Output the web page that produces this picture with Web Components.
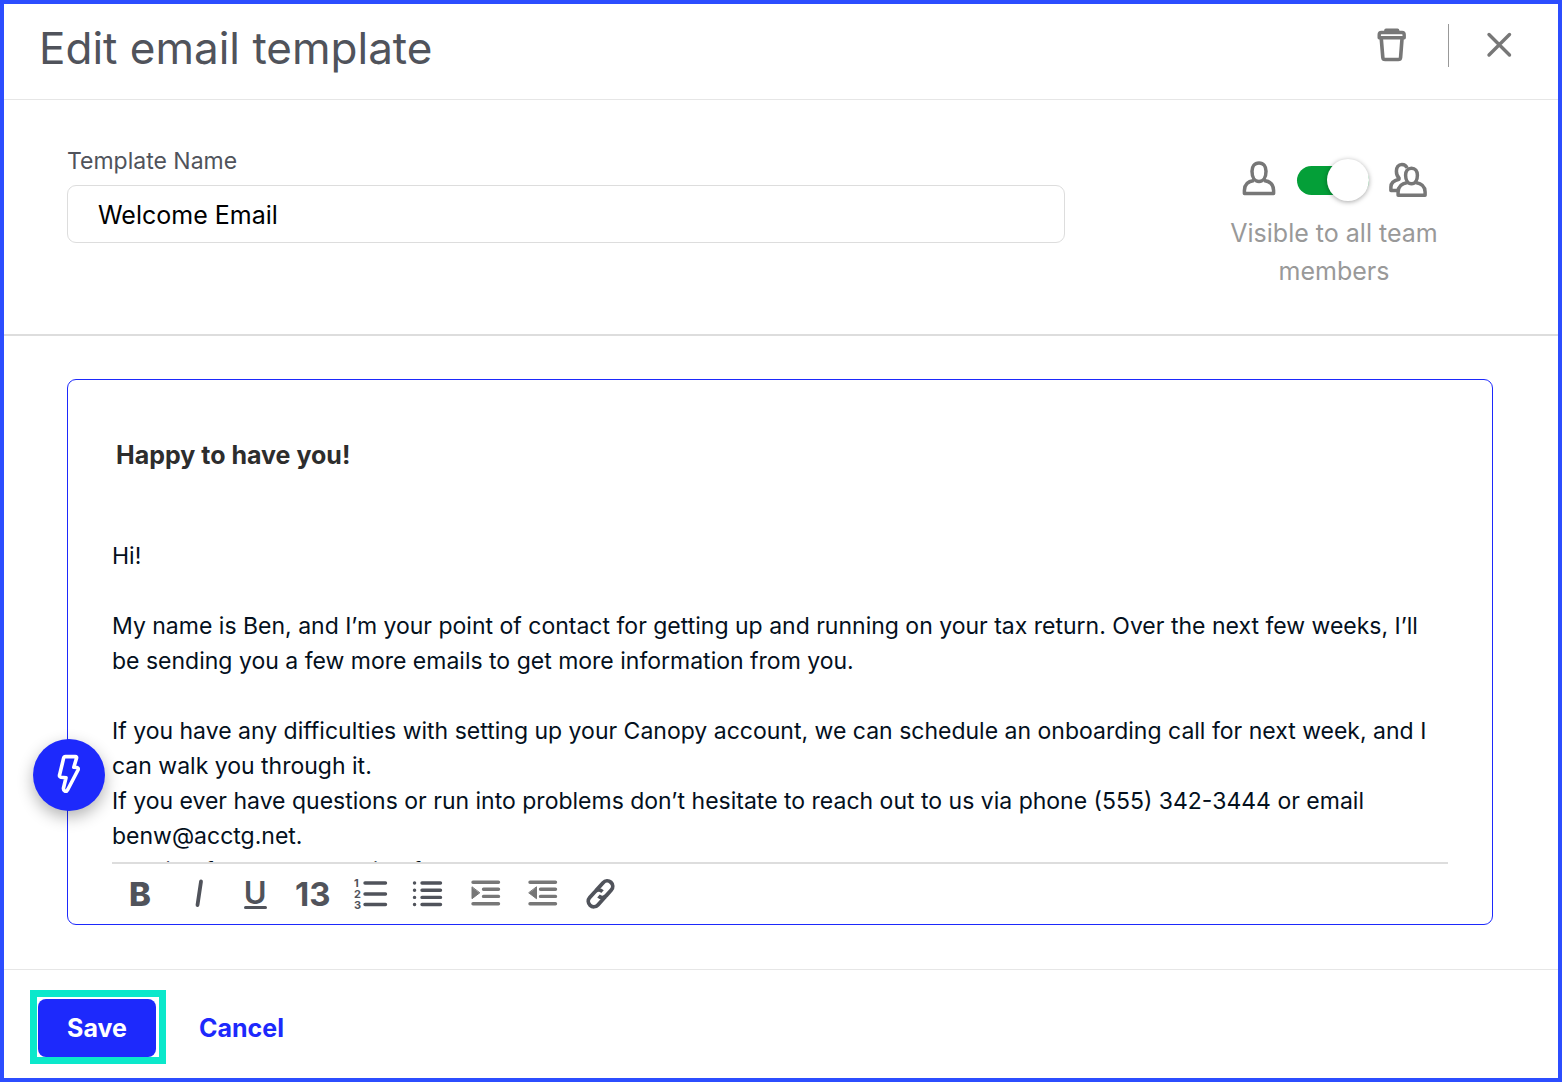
<!DOCTYPE html>
<html lang="en">
<head>
<meta charset="utf-8">
<meta name="viewport" content="width=device-width, initial-scale=1">
<title>Edit email template</title>
<style>
    body {
        margin: 0;
        font-family: Inter, "Liberation Sans", sans-serif;
        font-size: 24px;
        color: #04101d;
        --primary: #1d29fc;
        --slate: #50535b;
        --gray: #777777;
    }
</style>
</head>
<body>
<template-dialog>
    <dialog-header slot="header">Edit email template</dialog-header>
    <template-settings slot="settings">
        <text-field label="Template Name" value="Welcome Email"></text-field>
        <visibility-toggle>Visible to all team members</visibility-toggle>
    </template-settings>
    <email-editor slot="editor">
        <h2 slot="subject">Happy to have you!</h2>
        <div>Hi!</div>
        <div><br></div>
        <div>My name is Ben, and I’m your point of contact for getting up and running on your tax return. Over the next few weeks, I’ll be sending you a few more emails to get more information from you.</div>
        <div><br></div>
        <div>If you have any difficulties with setting up your Canopy account, we can schedule an onboarding call for next week, and I can walk you through it.</div>
        <div>If you ever have questions or run into problems don’t hesitate to reach out to us via phone (555) 342-3444 or email benw@acctg.net.</div>
        <div>Looking forward to hearing from you!</div>
        <editor-toolbar slot="toolbar"></editor-toolbar>
    </email-editor>
    <dialog-footer slot="footer"></dialog-footer>
</template-dialog>

<script>
function render(el, html) {
    let tmpl = document.createElement('template')
    tmpl.innerHTML = html
    let root = el.attachShadow({mode: 'open'})
    root.appendChild(tmpl.content.cloneNode(true))
    return root
}

class TemplateDialog extends HTMLElement {
    constructor() {
        super();
        render(this, `
            <style>
            :host {
                display: flex;
                flex-direction: column;
                box-sizing: border-box;
                height: 100vh;
                min-height: 720px;
                border: 4px solid #2c4dff;
                background: #ffffff;
            }
            main {
                flex: 1;
                min-height: 0;
                display: flex;
                padding: 43px 65px 44px 63px;
            }
            </style>
            <slot name="header"></slot>
            <slot name="settings"></slot>
            <main><slot name="editor"></slot></main>
            <slot name="footer"></slot>
        `)
    }
}

class DialogHeader extends HTMLElement {
    constructor() {
        super();
        render(this, `
            <style>
            :host {
                display: flex;
                align-items: center;
                justify-content: space-between;
                box-sizing: border-box;
                height: 96px;
                padding: 0 41px 8px 35px;
                border-bottom: 1px solid #e6e6e6;
                color: var(--slate);
            }
            h1 {
                margin: 0;
                font-size: 44px;
                line-height: 56px;
                font-weight: 400;
            }
            .actions {
                display: flex;
                align-items: center;
                padding-bottom: 5px;
            }
            button {
                display: flex;
                padding: 0;
                border: 0;
                background: none;
                color: var(--gray);
                cursor: pointer;
            }
            .divider {
                width: 1px;
                height: 43px;
                margin: 0 32px 0 36px;
                background: #999999;
            }
            svg {
                fill: none;
                stroke: currentColor;
                stroke-width: 3.6;
                stroke-linecap: round;
                stroke-linejoin: round;
            }
            </style>
            <h1><slot></slot></h1>
            <div class="actions">
                <button type="button" aria-label="Delete template">
                    <svg width="40" height="40" viewBox="0 0 40 40">
                        <path d="M14 5.200h11.500"/>
                        <path d="M7.200 12.700V9.700Q7.200 7.500 9.400 7.500H30Q32.200 7.500 32.200 9.700V12.700Z" stroke-width="3.400"/>
                        <path d="M9.300 14l1.500 18.300q.2 2.200 2.400 2.200h13q2.200 0 2.400-2.200L30 14"/>
                    </svg>
                </button>
                <div class="divider"></div>
                <button type="button" aria-label="Close">
                    <svg width="36" height="36" viewBox="0 0 36 36">
                        <path d="M8 7.500l20.500 20.500M28.500 7.500L8 28" stroke-width="3.400"/>
                    </svg>
                </button>
            </div>
        `)
    }
}

class TemplateSettings extends HTMLElement {
    constructor() {
        super();
        render(this, `
            <style>
            :host {
                display: flex;
                align-items: flex-start;
                justify-content: space-between;
                box-sizing: border-box;
                height: 236px;
                padding: 46px 65px 0 63px;
                border-bottom: 2px solid #dddddd;
            }
            ::slotted(text-field) {
                flex: 0 1 70%;
            }
            ::slotted(visibility-toggle) {
                width: 318px;
            }
            </style>
            <slot></slot>
        `)
    }
}

class TextField extends HTMLElement {
    constructor() {
        super();
        let root = render(this, `
            <style>
            :host {
                display: flex;
                flex-direction: column;
                gap: 8px;
            }
            label {
                font-size: 23px;
                line-height: 31px;
                color: var(--slate);
            }
            input {
                box-sizing: border-box;
                width: 100%;
                height: 58px;
                padding: 2px 30px 0;
                border: 1px solid #dddddd;
                border-radius: 9px;
                outline: none;
                background: #ffffff;
                font: inherit;
                font-size: 25px;
                color: #000000;
            }
            input:focus {
                border-color: var(--primary);
            }
            </style>
            <label for="field"></label>
            <input type="text" id="field">
        `)
        root.querySelector('label').textContent = this.getAttribute('label')
        root.getElementById('field').value = this.getAttribute('value')
    }
}

class VisibilityToggle extends HTMLElement {
    constructor() {
        super();
        render(this, `
            <style>
            :host {
                display: flex;
                flex-direction: column;
                align-items: center;
                gap: 12px;
                padding-top: 12px;
            }
            .row {
                display: flex;
                align-items: center;
                gap: 20px;
            }
            svg {
                fill: none;
                stroke: var(--gray);
                stroke-width: 3.5;
                stroke-linejoin: round;
            }
            input {
                appearance: none;
                display: flex;
                align-items: center;
                justify-content: flex-start;
                width: 72px;
                height: 29px;
                margin: 0;
                border-radius: 15px;
                background: #b5b5b5;
                cursor: pointer;
            }
            input::before {
                content: "";
                width: 42px;
                height: 42px;
                border-radius: 50%;
                background: #ffffff;
                box-shadow: 0 1px 5px rgba(0, 0, 0, .35);
            }
            input:checked {
                justify-content: flex-end;
                background: #049f38;
            }
            label {
                width: 240px;
                font-size: 25px;
                line-height: 38px;
                text-align: center;
                color: #999999;
            }
            </style>
            <div class="row">
                <svg width="38" height="44" viewBox="0 0 38 44">
                    <path d="M20 5c-4.600 0-7 3.300-7 8.200 0 6 2.700 10.300 7 10.300s7-4.300 7-10.300C27 8.300 24.600 5 20 5Z"/>
                    <path d="M15 22.500C8.500 23.300 5.400 27 5.400 32.500v3h29.200v-3c0-5.500-3.100-9.200-9.600-10"/>
                </svg>
                <input type="checkbox" id="visible" role="switch" checked>
                <svg width="40" height="44" viewBox="0 0 40 44">
                    <path d="M18 10C17.200 7.600 15.300 6.500 12.900 6.500c-3.500 0-5.500 2.700-5.500 6.700 0 3.200 1 5.300 2.600 6.900v1.200C5 22.500 1.900 25 1.900 29v3.500h7"/>
                    <path d="M22.500 10.200c-3.700 0-5.900 2.900-5.900 7 0 5 2.300 8.600 5.900 8.600s5.900-3.600 5.900-8.600c0-4.100-2.200-7-5.900-7Z"/>
                    <path d="M18.500 24.500c-6 1-9.400 4.500-9.400 9.500v3.300h27V34c0-5-3.400-8.500-9.400-9.500"/>
                </svg>
            </div>
            <label for="visible"><slot></slot></label>
        `)
    }
}

class EmailEditor extends HTMLElement {
    constructor() {
        super();
        render(this, `
            <style>
            :host {
                position: relative;
                flex: 1;
                min-width: 0;
                display: flex;
                flex-direction: column;
                box-sizing: border-box;
                padding: 0 44px;
                border: 1px solid var(--primary);
                border-radius: 9px;
            }
            ::slotted(h2) {
                margin: 56px 4px 65px;
                font-size: 25px;
                line-height: 38px;
                font-weight: 700;
                color: #2d2d2d;
            }
            .body {
                flex: 1;
                min-height: 0;
                overflow: hidden;
                font-size: 23px;
                line-height: 35px;
                outline: none;
            }
            .shortcut {
                position: absolute;
                left: -35px;
                bottom: 113px;
                display: flex;
                align-items: center;
                justify-content: center;
                width: 72px;
                height: 72px;
                padding: 0;
                border: 0;
                border-radius: 50%;
                background: var(--primary);
                box-shadow: 0 6px 16px rgba(0, 0, 0, .3);
                cursor: pointer;
            }
            </style>
            <slot name="subject"></slot>
            <div class="body" contenteditable="true" role="textbox" aria-label="Message"><slot></slot></div>
            <slot name="toolbar"></slot>
            <button type="button" class="shortcut" aria-label="Insert placeholder">
                <svg width="40" height="44" viewBox="0 0 40 44" fill="none" stroke="#ffffff" stroke-width="3.600" stroke-linejoin="round">
                    <path d="M16.500 3.600H26.300Q28 3.600 27.500 5.300L24.800 14.200 27.800 14.500Q29.800 15 29 17L18.800 36.500Q17.500 38.800 15.800 38 14.200 37.300 14.500 35L17 24.800 12 24.300Q10 23.800 10.600 21.800L14.600 5.200Q15 3.600 16.500 3.600Z"/>
                </svg>
            </button>
        `)
    }
}

class EditorToolbar extends HTMLElement {
    constructor() {
        super();
        render(this, `
            <style>
            :host {
                display: block;
                border-top: 2px solid #dddddd;
            }
            .tools {
                display: flex;
                align-items: center;
                justify-content: space-between;
                max-width: 509px;
                height: 60px;
                padding-left: 8px;
                box-sizing: border-box;
            }
            button {
                display: flex;
                align-items: center;
                justify-content: center;
                width: 40px;
                height: 40px;
                padding: 0;
                border: 0;
                background: none;
                font: inherit;
                font-size: 33px;
                line-height: 40px;
                font-weight: 700;
                color: var(--slate);
                cursor: pointer;
            }
            .bold {
                font-weight: 800;
            }
            .underline {
                flex-direction: column;
                font-size: 31px;
                line-height: 27px;
                font-weight: 600;
            }
            .underline::after {
                content: "";
                width: 23px;
                height: 3px;
                border-radius: 2px;
                background: currentColor;
            }
            .indent {
                color: var(--gray);
            }
            svg {
                fill: none;
                stroke: currentColor;
                stroke-width: 3.400;
                stroke-linecap: round;
            }
            text {
                font-size: 11px;
                font-weight: 700;
                fill: currentColor;
                stroke: none;
            }
            .fill {
                fill: currentColor;
                stroke-width: 1;
                stroke-linejoin: round;
            }
            </style>
            <div class="tools" role="toolbar" aria-label="Formatting">
                <button type="button" class="bold" aria-label="Bold">B</button>
                <button type="button" aria-label="Italic">
                    <svg width="40" height="40" viewBox="0 0 40 40"><path d="M23 7.500L19.500 31" stroke-width="3.800"/></svg>
                </button>
                <button type="button" class="underline" aria-label="Underline">U</button>
                <button type="button" aria-label="Font size">13</button>
                <button type="button" aria-label="Numbered list">
                    <svg width="40" height="40" viewBox="0 0 40 40">
                        <text x="3" y="13">1</text>
                        <text x="3" y="24">2</text>
                        <text x="3" y="35">3</text>
                        <path d="M14 9h20.500M14 20h20.500M14 30.500h20.500"/>
                    </svg>
                </button>
                <button type="button" aria-label="Bulleted list">
                    <svg width="40" height="40" viewBox="0 0 40 40">
                        <path d="M14 9h18.500M14 16.200h18.500M14 23.400h18.500M14 30.500h18.500M6.500 9h.1M6.500 16.200h.1M6.500 23.400h.1M6.500 30.500h.1"/>
                    </svg>
                </button>
                <button type="button" class="indent" aria-label="Increase indent">
                    <svg width="40" height="40" viewBox="0 0 40 40">
                        <path d="M7 8.200h25.500M17.500 15.200h15M17.500 22.400h15M7 29.700h25.500"/>
                        <path class="fill" d="M6 13.200v11.500l7.500-5.700Z"/>
                    </svg>
                </button>
                <button type="button" class="indent" aria-label="Decrease indent">
                    <svg width="40" height="40" viewBox="0 0 40 40">
                        <path d="M7 8.200h25.500M17.500 15.200h15M17.500 22.400h15M7 29.700h25.500"/>
                        <path class="fill" d="M13.500 13.200v11.500L6 19Z"/>
                    </svg>
                </button>
                <button type="button" aria-label="Insert link">
                    <svg width="40" height="40" viewBox="0 0 40 40" stroke-width="4">
                        <g transform="rotate(-48 19.500 19.800)" style="stroke-width: 3.8; stroke-linecap: butt">
                            <path d="M20.500 25.300H9.500a5.500 5.500 0 0 1 0-11h7.500a5.500 5.500 0 0 1 5.500 5.500"/>
                            <path d="M18.500 14.300H29.500a5.500 5.500 0 0 1 0 11h-7.500a5.500 5.500 0 0 1-5.500-5.500"/>
                        </g>
                    </svg>
                </button>
            </div>
        `)
    }
}

class DialogFooter extends HTMLElement {
    constructor() {
        super();
        render(this, `
            <style>
            :host {
                display: flex;
                align-items: center;
                gap: 33px;
                box-sizing: border-box;
                height: 109px;
                padding: 8px 26px 0;
                border-top: 1px solid #e6e6e6;
            }
            .highlight {
                padding: 2px 3px 0 1px;
                margin-top: 12px;
                align-self: flex-start;
                border: 7px solid #0be8cb;
            }
            button {
                height: 58px;
                padding: 0;
                border: 0;
                background: none;
                font: inherit;
                font-size: 25px;
                font-weight: 700;
                color: var(--primary);
                cursor: pointer;
            }
            .save {
                display: block;
                width: 118px;
                border-radius: 8px;
                background: var(--primary);
                color: #ffffff;
            }
            </style>
            <div class="highlight"><button type="submit" class="save">Save</button></div>
            <button type="button">Cancel</button>
        `)
    }
}

window.customElements.define("template-dialog", TemplateDialog)
window.customElements.define("dialog-header", DialogHeader)
window.customElements.define("template-settings", TemplateSettings)
window.customElements.define("text-field", TextField)
window.customElements.define("visibility-toggle", VisibilityToggle)
window.customElements.define("email-editor", EmailEditor)
window.customElements.define("editor-toolbar", EditorToolbar)
window.customElements.define("dialog-footer", DialogFooter)
</script>
</body>
</html>
